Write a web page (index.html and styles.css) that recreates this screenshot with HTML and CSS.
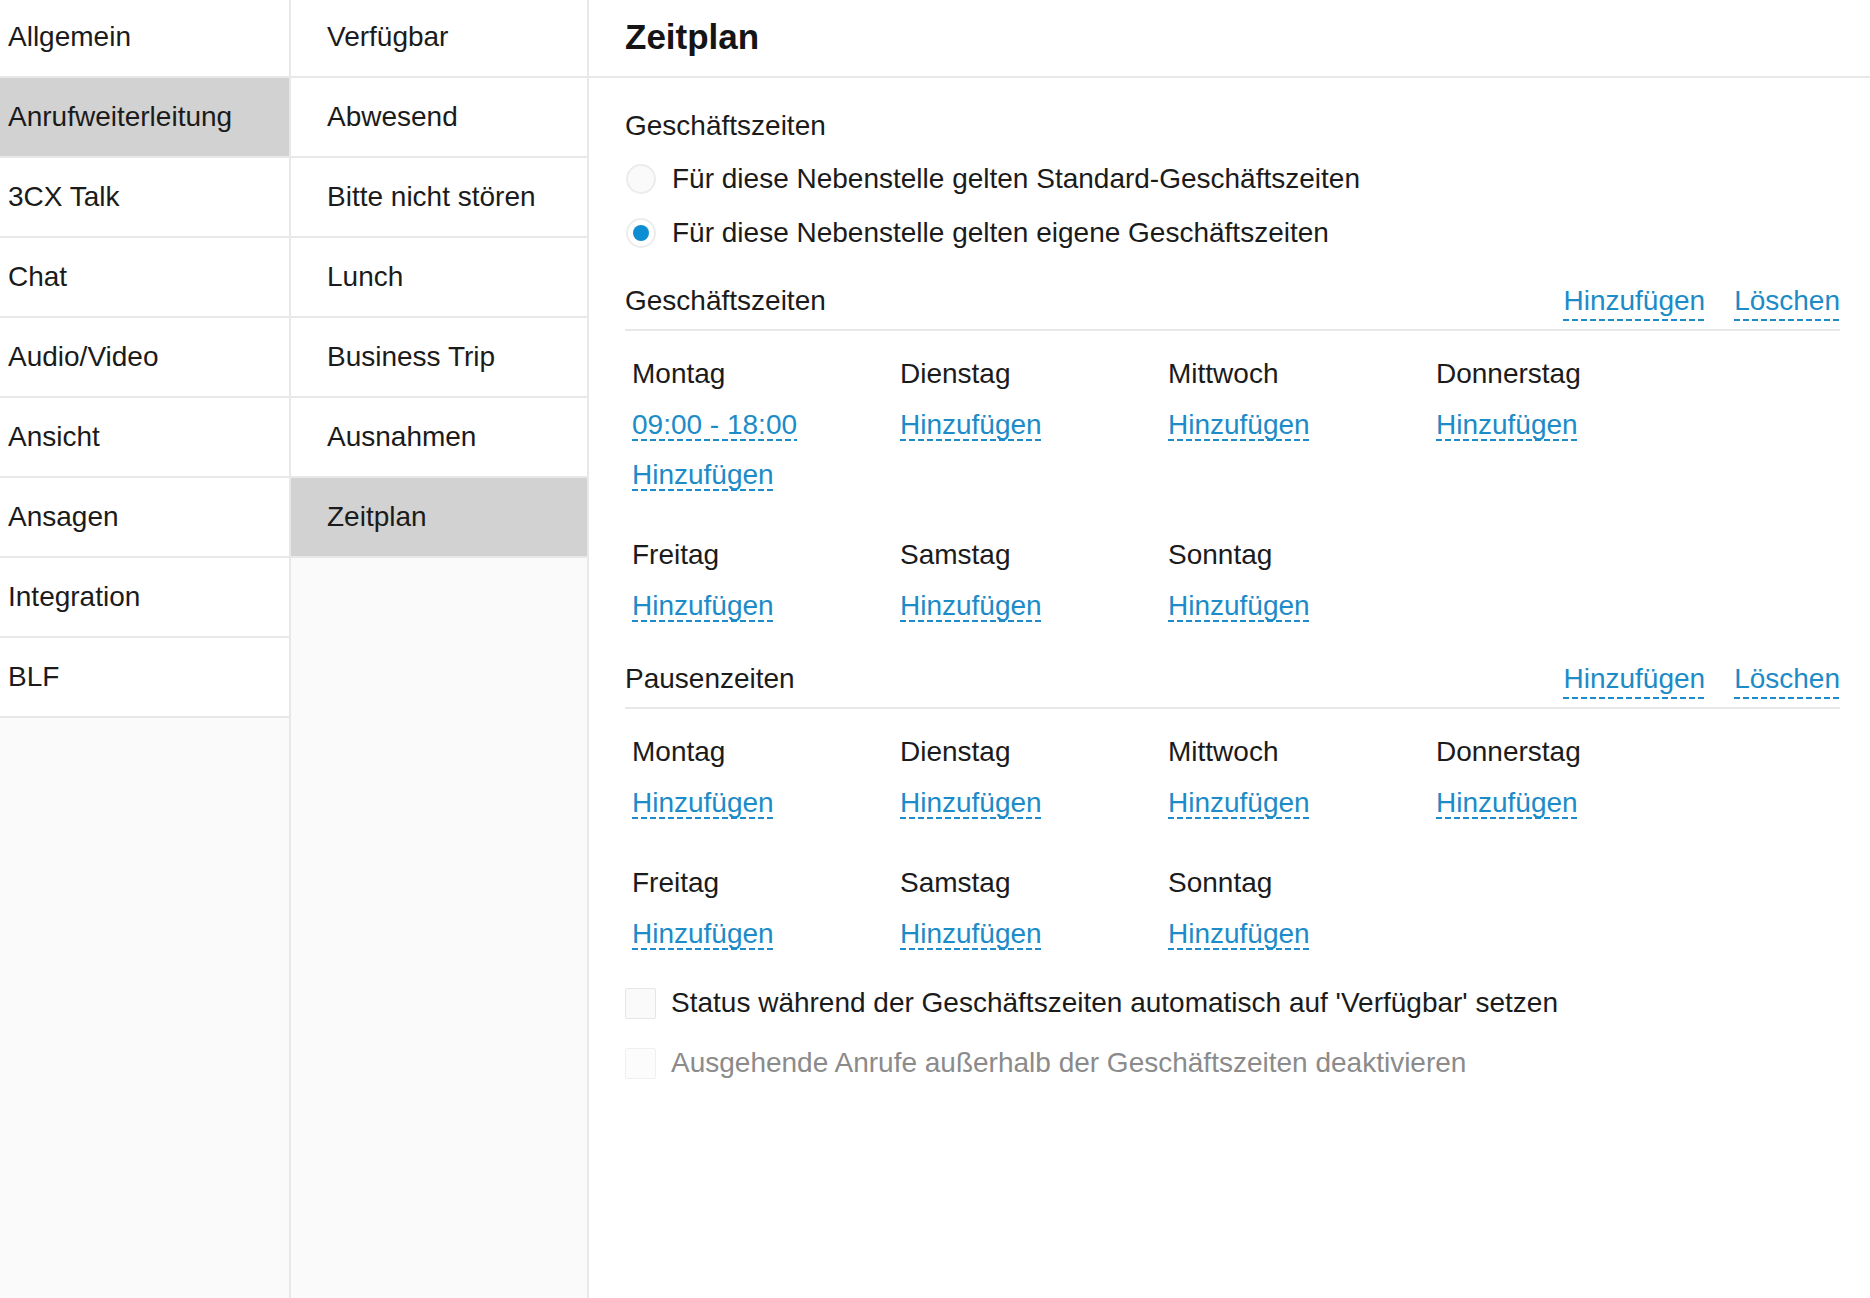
FILE: index.html
```html
<!DOCTYPE html>
<html lang="de">
<head>
<meta charset="utf-8">
<title>Zeitplan</title>
<link rel="stylesheet" href="styles.css">
</head>
<body>
<div class="app">
  <nav class="menu menu-main">
    <ul class="menu-list">
      <li class="menu-item">Allgemein</li>
      <li class="menu-item is-active">Anrufweiterleitung</li>
      <li class="menu-item">3CX Talk</li>
      <li class="menu-item">Chat</li>
      <li class="menu-item">Audio/Video</li>
      <li class="menu-item">Ansicht</li>
      <li class="menu-item">Ansagen</li>
      <li class="menu-item">Integration</li>
      <li class="menu-item">BLF</li>
    </ul>
  </nav>

  <nav class="menu menu-sub">
    <ul class="menu-list">
      <li class="menu-item">Verfügbar</li>
      <li class="menu-item">Abwesend</li>
      <li class="menu-item">Bitte nicht stören</li>
      <li class="menu-item">Lunch</li>
      <li class="menu-item">Business Trip</li>
      <li class="menu-item">Ausnahmen</li>
      <li class="menu-item is-active">Zeitplan</li>
    </ul>
  </nav>

  <main class="panel">
    <header class="panel-head">
      <h1 class="panel-title">Zeitplan</h1>
    </header>

    <div class="panel-body">
      <div class="field-label">Geschäftszeiten</div>
      <label class="option">
        <span class="radio"></span>
        <span>Für diese Nebenstelle gelten Standard-Geschäftszeiten</span>
      </label>
      <label class="option">
        <span class="radio is-on"></span>
        <span>Für diese Nebenstelle gelten eigene Geschäftszeiten</span>
      </label>

      <div class="section-head section-first">
        <span>Geschäftszeiten</span>
        <div class="actions">
          <a class="link link-head">Hinzufügen</a>
          <a class="link link-head">Löschen</a>
        </div>
      </div>
      <div class="week">
        <div class="day">
          <div class="slot day-name">Montag</div>
          <div class="slot slot-link"><a class="link">09:00 - 18:00</a></div>
          <div class="slot slot-link"><a class="link">Hinzufügen</a></div>
        </div>
        <div class="day">
          <div class="slot day-name">Dienstag</div>
          <div class="slot slot-link"><a class="link">Hinzufügen</a></div>
        </div>
        <div class="day">
          <div class="slot day-name">Mittwoch</div>
          <div class="slot slot-link"><a class="link">Hinzufügen</a></div>
        </div>
        <div class="day">
          <div class="slot day-name">Donnerstag</div>
          <div class="slot slot-link"><a class="link">Hinzufügen</a></div>
        </div>
        <div class="day">
          <div class="slot day-name">Freitag</div>
          <div class="slot slot-link"><a class="link">Hinzufügen</a></div>
        </div>
        <div class="day">
          <div class="slot day-name">Samstag</div>
          <div class="slot slot-link"><a class="link">Hinzufügen</a></div>
        </div>
        <div class="day">
          <div class="slot day-name">Sonntag</div>
          <div class="slot slot-link"><a class="link">Hinzufügen</a></div>
        </div>
      </div>

      <div class="section-head section-next">
        <span>Pausenzeiten</span>
        <div class="actions">
          <a class="link link-head">Hinzufügen</a>
          <a class="link link-head">Löschen</a>
        </div>
      </div>
      <div class="week">
        <div class="day">
          <div class="slot day-name">Montag</div>
          <div class="slot slot-link"><a class="link">Hinzufügen</a></div>
        </div>
        <div class="day">
          <div class="slot day-name">Dienstag</div>
          <div class="slot slot-link"><a class="link">Hinzufügen</a></div>
        </div>
        <div class="day">
          <div class="slot day-name">Mittwoch</div>
          <div class="slot slot-link"><a class="link">Hinzufügen</a></div>
        </div>
        <div class="day">
          <div class="slot day-name">Donnerstag</div>
          <div class="slot slot-link"><a class="link">Hinzufügen</a></div>
        </div>
        <div class="day">
          <div class="slot day-name">Freitag</div>
          <div class="slot slot-link"><a class="link">Hinzufügen</a></div>
        </div>
        <div class="day">
          <div class="slot day-name">Samstag</div>
          <div class="slot slot-link"><a class="link">Hinzufügen</a></div>
        </div>
        <div class="day">
          <div class="slot day-name">Sonntag</div>
          <div class="slot slot-link"><a class="link">Hinzufügen</a></div>
        </div>
      </div>

      <div class="checks">
        <label class="check">
          <span class="box"></span>
          <span>Status während der Geschäftszeiten automatisch auf 'Verfügbar' setzen</span>
        </label>
        <label class="check is-disabled">
          <span class="box"></span>
          <span>Ausgehende Anrufe außerhalb der Geschäftszeiten deaktivieren</span>
        </label>
      </div>
    </div>
  </main>
</div>
</body>
</html>
```

FILE: styles.css
```css
* {
  box-sizing: border-box;
}

html,
body {
  margin: 0;
  height: 100%;
}

body {
  font-family: "Liberation Sans", Arial, Helvetica, sans-serif;
  font-size: 28px;
  color: #1b1b1b;
  background: #ffffff;
  overflow: hidden;
}

.app {
  display: grid;
  grid-template-columns: 291px 298px 1fr;
  height: 100vh;
}

/* ---- side menus ---- */
.menu {
  background: #fafafa;
  border-right: 2px solid #e8e8e8;
  overflow: hidden;
}

.menu-list {
  list-style: none;
  margin: -2px 0 0;
  padding: 0;
}

.menu-item {
  height: 80px;
  display: flex;
  align-items: center;
  background: #ffffff;
  border-bottom: 2px solid #e8e8e8;
  white-space: nowrap;
}

.menu-main .menu-item {
  padding-left: 8px;
}

.menu-sub .menu-item {
  padding-left: 36px;
}

.menu-item.is-active {
  background: #d2d2d2;
}

/* ---- content panel ---- */
.panel {
  background: #ffffff;
  min-width: 0;
}

.panel-head {
  height: 78px;
  display: flex;
  align-items: center;
  padding-left: 36px;
  padding-bottom: 2px;
  border-bottom: 2px solid #e8e8e8;
}

.panel-title {
  margin: 0;
  font-size: 35px;
  font-weight: 700;
  color: #151515;
}

.panel-body {
  padding: 31px 30px 0 36px;
}

.field-label {
  line-height: 34px;
  margin-bottom: 9px;
}

.option {
  height: 54px;
  display: flex;
  align-items: center;
  gap: 16px;
}

.radio {
  width: 30px;
  height: 30px;
  margin-left: 1px;
  border-radius: 50%;
  border: 2px solid #ececec;
  background: #fafafa;
  display: flex;
  align-items: center;
  justify-content: center;
}

.radio.is-on {
  background: #ffffff;
}

.radio.is-on::after {
  content: "";
  width: 16px;
  height: 16px;
  border-radius: 50%;
  background: #0e8ed2;
}

/* ---- section headers ---- */
.section-head {
  height: 58px;
  display: flex;
  align-items: center;
  justify-content: space-between;
  border-bottom: 2px solid #e8e8e8;
}

.section-first {
  margin-top: 13px;
}

.section-next {
  margin-top: 21px;
}

.actions {
  display: flex;
  gap: 29px;
}

/* ---- dashed links ---- */
.link {
  display: inline-block;
  line-height: 32px;
  color: #1c8bc7;
  cursor: pointer;
  background-image: repeating-linear-gradient(to right, #1c8bc7 0 6px, transparent 6px 9px);
  background-size: 100% 2px;
  background-position: left bottom;
  background-repeat: no-repeat;
}

.link-head {
  padding-bottom: 4px;
  margin-top: 4px;
}

/* ---- week grid ---- */
.week {
  display: grid;
  grid-template-columns: repeat(4, 268px);
  row-gap: 31px;
  margin-top: 18px;
  padding-left: 7px;
}

.day {
  display: flex;
  flex-direction: column;
}

.slot {
  height: 50px;
  display: flex;
  align-items: center;
  white-space: nowrap;
}

.slot-link {
  padding-top: 2px;
}

/* ---- checkboxes ---- */
.checks {
  margin-top: 18px;
  display: flex;
  flex-direction: column;
  gap: 6px;
}

.check {
  height: 54px;
  display: flex;
  align-items: center;
  gap: 15px;
}

.box {
  width: 31px;
  height: 31px;
  border: 1px solid #e6e6e6;
  border-radius: 2px;
  background: #fafafa;
}

.check.is-disabled {
  color: #8b8b8b;
}

.check.is-disabled .box {
  border-color: #f0f0f0;
  background: #fcfcfc;
}
```
